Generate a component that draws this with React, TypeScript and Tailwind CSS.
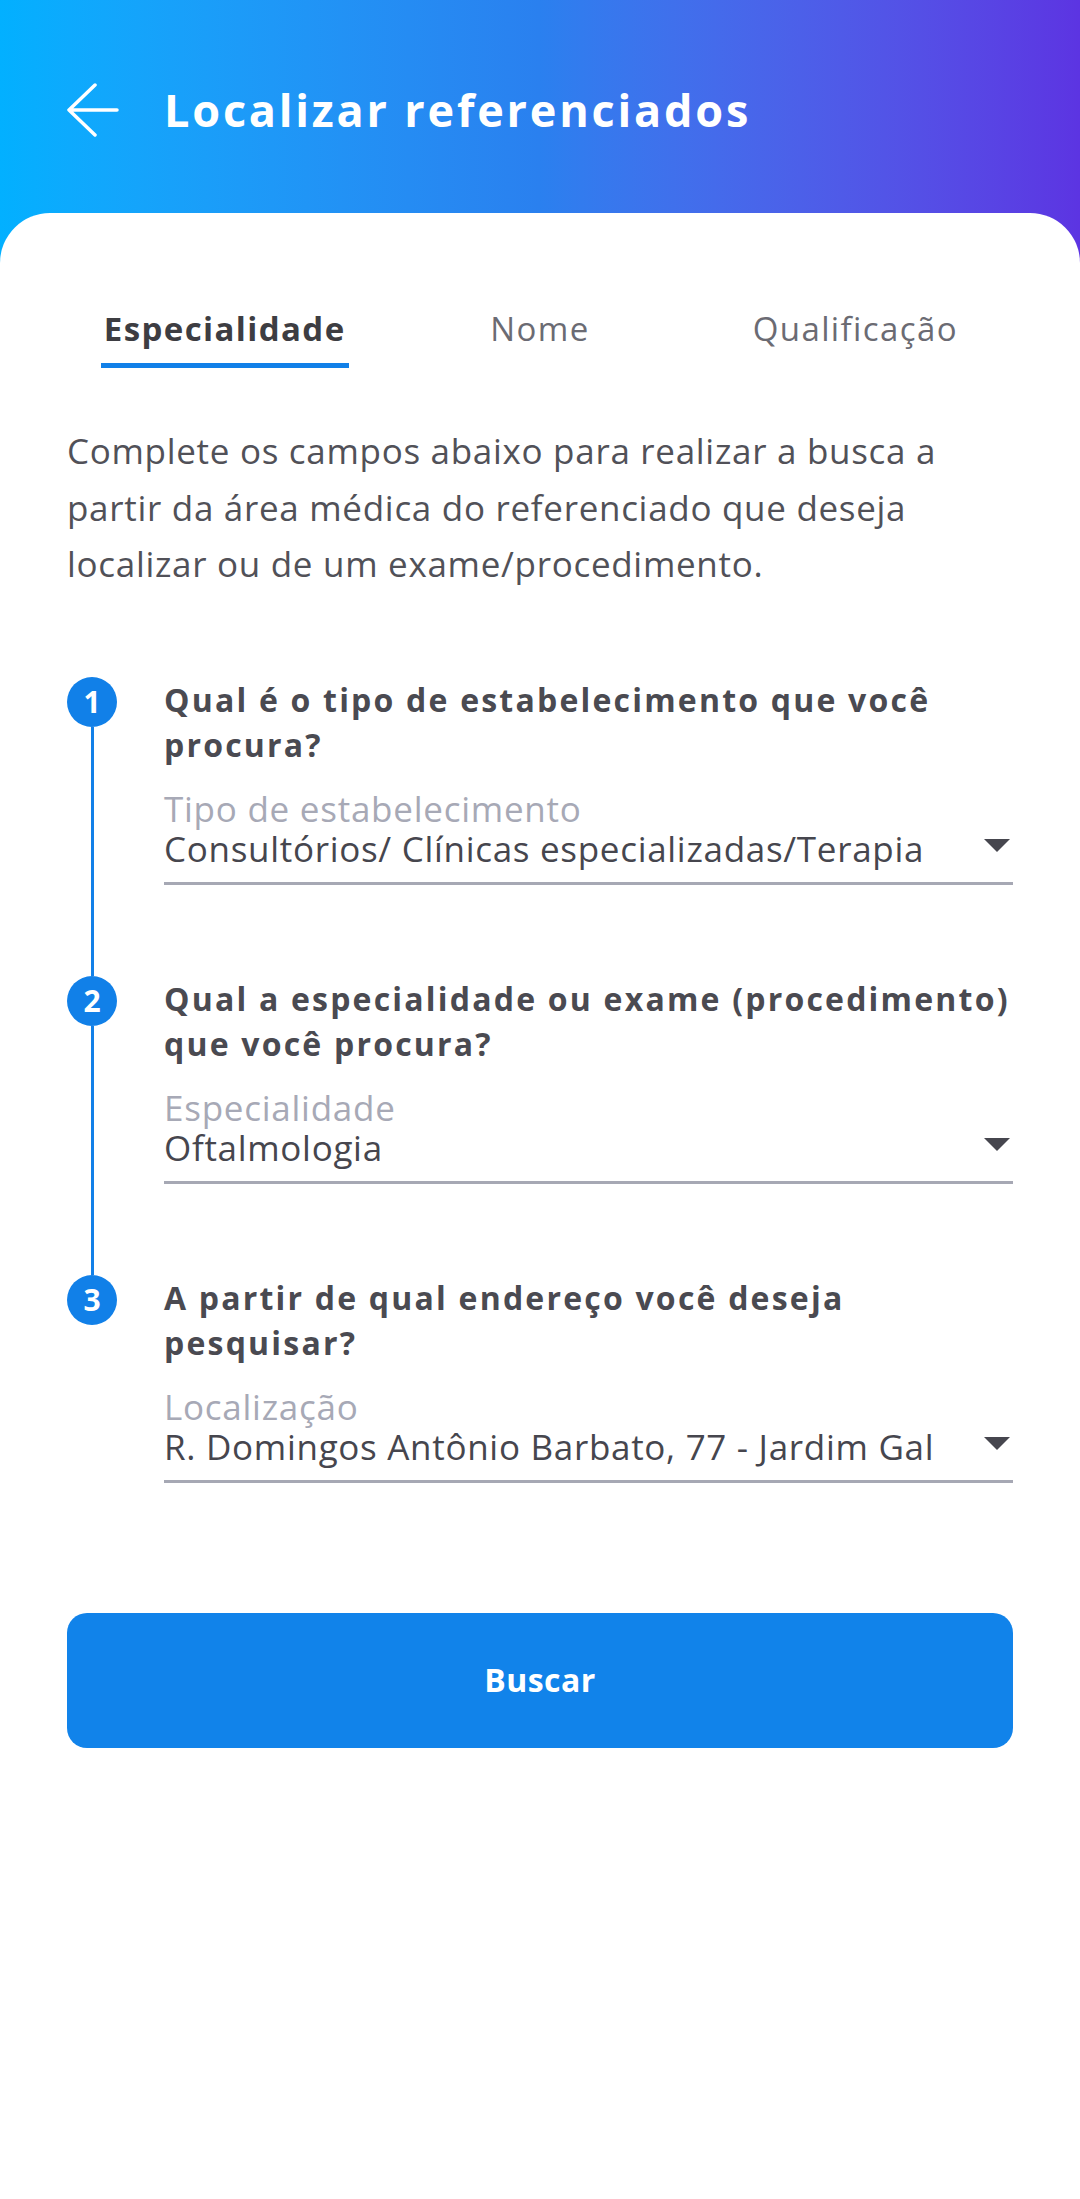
import React from "react";

const steps = [
    {
        n: 1,
        question: "Qual é o tipo de estabelecimento que você procura?",
        label: "Tipo de estabelecimento",
        value: "Consultórios/ Clínicas especializadas/Terapia",
    },
    {
        n: 2,
        question: "Qual a especialidade ou exame (procedimento) que você procura?",
        label: "Especialidade",
        value: "Oftalmologia",
    },
    {
        n: 3,
        question: "A partir de qual endereço você deseja pesquisar?",
        label: "Localização",
        value: "R. Domingos Antônio Barbato, 77 - Jardim Gal",
    },
];

function BackArrow() {
    return (
        <svg width="52" height="54" viewBox="0 0 52 54" fill="none">
            <path d="M2 27H50M28 2L2 27L28 52" stroke="white" strokeWidth="3.5" strokeLinecap="round" strokeLinejoin="round" />
        </svg>
    );
}

function Caret() {
    return (
        <svg width="26" height="13" viewBox="0 0 26 13">
            <polygon points="0,0 26,0 13,13" fill="#46464e" />
        </svg>
    );
}

export default function App() {
    return (
        <div className="min-h-screen bg-white font-['Open_Sans',sans-serif]">
            <header className="h-[263px] bg-gradient-to-r from-[#02b0ff] via-[#2a80ef] to-[#5c34e2]">
                <div className="flex items-center h-[60px] mt-[80px] pl-[67px] gap-[45px] inline-flex">
                    <BackArrow />
                    <h1 className="text-white text-[45px] leading-[60px] font-bold tracking-[2.8px]">Localizar referenciados</h1>
                </div>
            </header>

            <main className="relative -mt-[50px] bg-white rounded-t-[50px] px-[67px] pt-[96px]">
                {/* tabs */}
                <div className="grid grid-cols-3 text-[33px] leading-[40px] tracking-[1.4px]">
                    <div className="flex flex-col items-center">
                        <span className="font-bold text-[#3d3d42]">Especialidade</span>
                        <span className="mt-[14px] h-[5px] w-[248px] bg-[#1180e8]" />
                    </div>
                    <div className="flex justify-center text-[#6b6b73]">Nome</div>
                    <div className="flex justify-center text-[#6b6b73]">Qualificação</div>
                </div>

                <p className="mt-[55px] text-[35px] leading-[56.5px] tracking-[0.7px] text-[#515158]">
                    Complete os campos abaixo para realizar a busca a partir da área médica do referenciado que deseja localizar ou de um exame/procedimento.
                </p>

                <div className="mt-[84px]">
                    {steps.map((s, i) => (
                        <div key={s.n} className="flex">
                            <div className="w-[50px] flex flex-col items-center shrink-0">
                                <div className="w-[50px] h-[50px] rounded-full bg-[#1180e8] flex items-center justify-center text-white text-[30px] font-bold">
                                    {s.n}
                                </div>
                                {i < steps.length - 1 && <div className="flex-1 w-[3px] bg-[#1180e8]" />}
                            </div>
                            <div className={"flex-1 ml-[47px] " + (i < steps.length - 1 ? "pb-[91px]" : "")}>
                                <h2 className="text-[32px] leading-[45px] font-bold tracking-[2.2px] text-[#4a4a51] -mr-[20px]">{s.question}</h2>
                                <div className="mt-[22px] border-b-[3px] border-[#a6a8b4] pb-[13px]">
                                    <div className="text-[35px] leading-[40px] tracking-[0.75px] text-[#a7a9b6]">{s.label}</div>
                                    <div className="flex items-center justify-between">
                                        <span className="text-[35px] leading-[40px] tracking-[0.7px] text-[#46464e]">{s.value}</span>
                                        <span className="mr-[3px] -mt-[6px]"><Caret /></span>
                                    </div>
                                </div>
                            </div>
                        </div>
                    ))}
                </div>

                <button className="mt-[130px] w-full h-[135px] rounded-[20px] bg-[#1183ea] text-white text-[32px] font-bold tracking-[0.5px]">
                    Buscar
                </button>
            </main>
        </div>
    );
}
